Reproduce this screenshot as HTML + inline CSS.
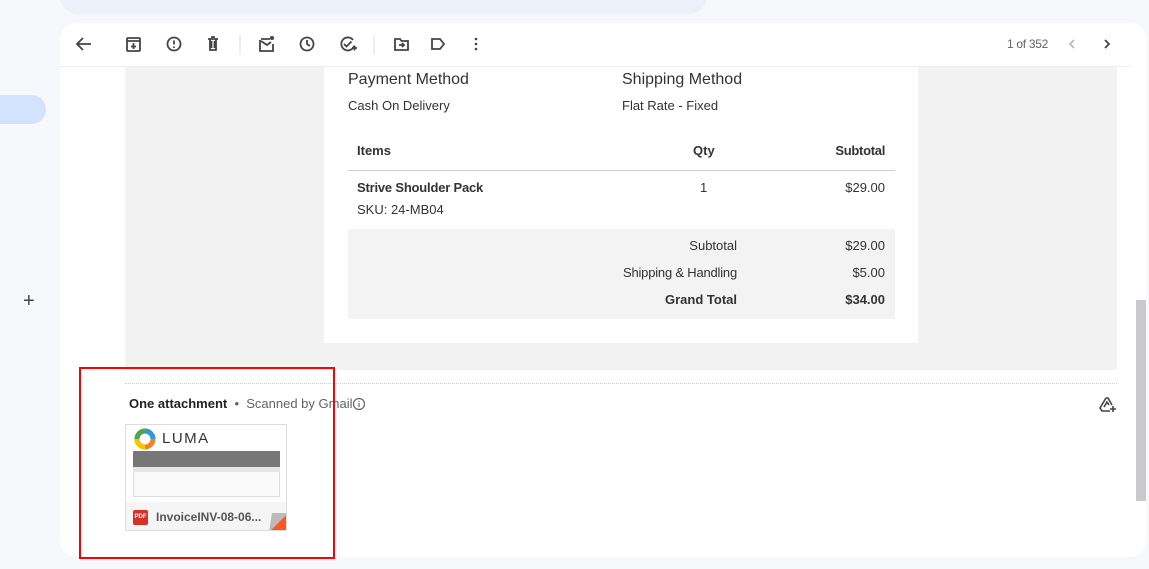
<!DOCTYPE html>
<html><head><style>
*{margin:0;padding:0;box-sizing:border-box}
body{width:1149px;height:569px;background:#f6f8fc;font-family:"Liberation Sans",Arial,sans-serif;position:relative;overflow:hidden;color:#222}
.a{position:absolute}
.t{position:absolute;white-space:nowrap}
</style></head><body>
<div class="a" style="left:60px;top:-20px;width:647px;height:34px;background:#eaf1fb;border-radius:0 0 18px 18px"></div>
<div class="a" style="left:0;top:95px;width:46px;height:29px;background:#d3e3fd;border-radius:0 15px 15px 0"></div>
<div class="t" style="left:23px;top:290px;font-size:20px;color:#444">+</div>
<div class="a" style="left:60px;top:23px;width:1086px;height:534px;background:#fff;border-radius:16px"></div>
<svg class="a" style="left:60px;top:23px" width="1086" height="44" fill="none" stroke="#444" stroke-width="1.8">
<path d="M31 21h-13M23 15l-6 6 6 6"/>
<rect x="67" y="15" width="13" height="13" rx="1"/><path d="M67 18h13M73.5 20v6M71 23.5h5"/>
<circle cx="114" cy="21" r="6.5"/><path d="M114 17.5v4M114 23.5v1.5"/>
<path d="M148 16h10M150 16v11h6V16M152 15v-1h2v1M151.5 18v7M154.5 18v7"/>
<path d="M180 12v20" stroke="#ddd" stroke-width="1"/>
<path d="M201 16h9M213 21v7h-13v-11"/><path d="M201 18l6 4 4-3"/><circle cx="212" cy="15" r="2" fill="#444" stroke="none"/>
<circle cx="247" cy="21" r="6.5"/><path d="M247 17v4l3 2"/>
<path d="M293 17a6.5 6.5 0 1 0 1 6"/><path d="M284 21l2.5 2.5 5-5M292 25h5M294.5 22.5v5"/>
<path d="M314 12v20" stroke="#ddd" stroke-width="1"/>
<path d="M335 16h5l1.5 2h6.5v9h-13z M339 22h5M342 20l2 2-2 2"/>
<path d="M372 16h8l4 5-4 5h-8z"/>
<circle cx="416" cy="16" r="1.3" fill="#444" stroke="none"/><circle cx="416" cy="21" r="1.3" fill="#444" stroke="none"/><circle cx="416" cy="26" r="1.3" fill="#444" stroke="none"/>
<path d="M1014 17l-4 4 4 4" stroke="#bbb"/><path d="M1045 17l4 4-4 4"/>
</svg>
<div class="t" style="left:1007px;top:37px;font-size:12px;letter-spacing:-0.3px;color:#5f6368">1 of 352</div>
<div class="a" style="left:60px;top:66px;width:1070px;height:1px;background:#eee"></div>
<div class="a" style="left:125px;top:67px;width:992px;height:303px;background:#f2f2f2"></div>
<div class="a" style="left:324px;top:67px;width:594px;height:276px;background:#fff"></div>
<div class="t" style="left:348px;top:71px;font-size:16px;color:#333">Payment Method</div>
<div class="t" style="left:622px;top:71px;font-size:16px;color:#333">Shipping Method</div>
<div class="t" style="left:348px;top:98px;font-size:13px;color:#333">Cash On Delivery</div>
<div class="t" style="left:622px;top:98px;font-size:13px;color:#333">Flat Rate - Fixed</div>
<div class="t" style="left:357px;top:143px;font-size:13px;font-weight:bold;color:#333">Items</div>
<div class="t" style="left:693px;top:143px;font-size:13px;font-weight:bold;color:#333">Qty</div>
<div class="t" style="right:264px;top:143px;font-size:13px;font-weight:bold;color:#333;letter-spacing:-0.3px">Subtotal</div>
<div class="a" style="left:348px;top:170px;width:547px;height:1px;background:#ccc"></div>
<div class="t" style="left:357px;top:180px;font-size:13px;font-weight:bold;color:#333;letter-spacing:-0.2px">Strive Shoulder Pack</div>
<div class="t" style="left:700px;top:180px;font-size:13px;color:#333">1</div>
<div class="t" style="right:264px;top:180px;font-size:13px;color:#333">$29.00</div>
<div class="t" style="left:357px;top:202px;font-size:13px;color:#333">SKU: 24-MB04</div>
<div class="a" style="left:348px;top:229px;width:547px;height:90px;background:#f3f3f3"></div>
<div class="t" style="right:412px;top:238px;font-size:13px;color:#333">Subtotal</div>
<div class="t" style="right:264px;top:238px;font-size:13px;color:#333">$29.00</div>
<div class="t" style="right:412px;top:265px;font-size:13px;color:#333;letter-spacing:-0.2px">Shipping &amp; Handling</div>
<div class="t" style="right:264px;top:265px;font-size:13px;color:#333">$5.00</div>
<div class="t" style="right:412px;top:292px;font-size:13px;font-weight:bold;color:#333">Grand Total</div>
<div class="t" style="right:264px;top:292px;font-size:13px;font-weight:bold;color:#333">$34.00</div>
<div class="a" style="left:125px;top:383px;width:992px;border-top:1px dotted #ccc"></div>
<div class="t" style="left:129px;top:396px;font-size:13px;font-weight:bold;color:#222">One attachment <span style="font-weight:normal;color:#5f6368">&nbsp;•&nbsp; Scanned by Gmail</span></div>
<svg class="a" style="left:352px;top:397px" width="14" height="14" fill="none" stroke="#666" stroke-width="1.2"><circle cx="7" cy="7" r="5.5"/><path d="M7 6v4M7 4v1"/></svg>
<svg class="a" style="left:1098px;top:395px" width="20" height="18" fill="none" stroke="#444" stroke-width="1.6"><path d="M8 3l-6 10 2 3h8M8 3h2l4 7M6 12l3-5 2 3"/><path d="M15 11v6M12 14h6"/></svg>
<div class="a" style="left:125px;top:424px;width:162px;height:107px;border:1px solid #ddd;background:#fff;overflow:hidden">
 <svg class="a" style="left:8px;top:3px" width="22" height="22"><circle cx="11" cy="11" r="8" fill="none" stroke="#f58220" stroke-width="5"/><path d="M3 11a8 8 0 0 1 8-8" stroke="#4ba84a" stroke-width="5" fill="none"/><path d="M11 3a8 8 0 0 1 8 8" stroke="#2e9ad9" stroke-width="5" fill="none"/><path d="M3 11a8 8 0 0 0 8 8" stroke="#f6c400" stroke-width="5" fill="none"/></svg>
 <div class="t" style="left:36px;top:5px;font-size:15px;letter-spacing:1.5px;color:#333">LUMA</div>
 <div class="a" style="left:7px;top:26px;width:147px;height:16px;background:#777"></div>
 <div class="a" style="left:7px;top:42px;width:147px;height:30px;border:1px solid #ddd;background:#fafafa"></div>
 <div class="a" style="left:7px;top:42px;width:147px;height:5px;background:#e5e5e5"></div>
 <div class="a" style="left:0;top:77px;width:162px;height:30px;background:#f5f5f5"></div>
 <div class="a" style="left:7px;top:85px;width:15px;height:15px;background:#d93025;border-radius:2px;color:#fff;font-size:6px;font-weight:bold;text-align:center;line-height:15px">PDF</div>
 <div class="t" style="left:30px;top:85px;font-size:12px;color:#555;font-weight:bold">InvoiceINV-08-06...</div>
 <svg class="a" style="left:126px;top:88px" width="36" height="19"><path d="M36 0L17 19h19z" fill="#ff5722"/><path d="M17 19L36 0H20z" fill="#bbb"/></svg>
</div>
<div class="a" style="left:79px;top:367px;width:256px;height:192px;border:2px solid #f00"></div>
<div class="a" style="left:1136px;top:300px;width:10px;height:201px;background:#c9c9c9"></div>
</body></html>
